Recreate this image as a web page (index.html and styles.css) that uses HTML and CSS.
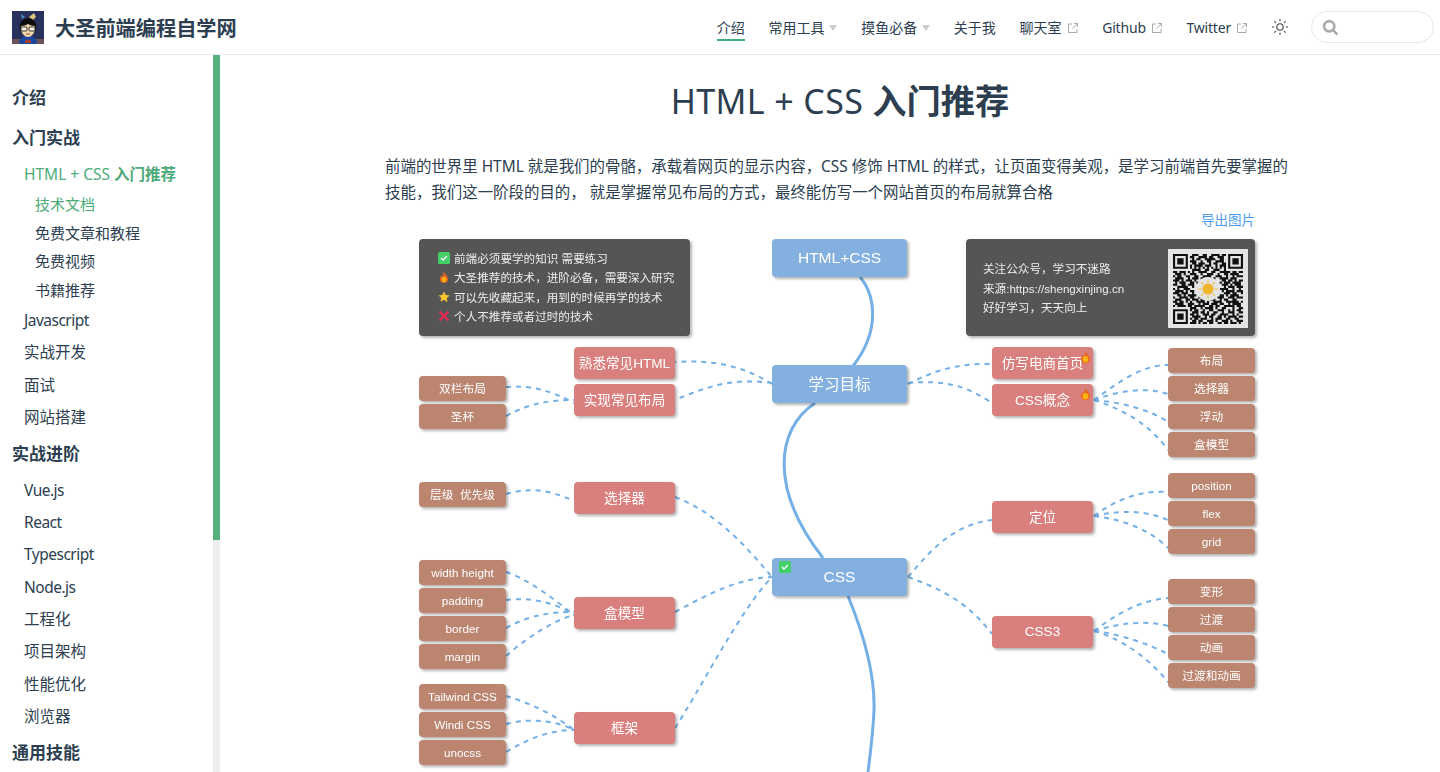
FILE: index.html
```html
<!DOCTYPE html>
<html lang="zh-CN">
<head>
<meta charset="utf-8">
<title>大圣前端编程自学网</title>
<link rel="stylesheet" href="styles.css">
</head>
<body>
<div class="app">
  <header class="navbar">
    <a class="brand">
      <svg class="avatar" viewBox="0 0 32 33">
        <rect width="32" height="33" fill="#27315c"/>
        <rect y="28" width="32" height="5" fill="#6d5353"/>
        <path d="M7 33c0-6 4-8 9-8s9 2 9 8z" fill="#1c47a0"/>
        <path d="M14 28l2 2 2-2 1 4h-6z" fill="#b5421f"/>
        <path d="M17 6l5-4 2 4-3 3z" fill="#d9c27a"/>
        <path d="M9 3l4 3-3 2z" fill="#4b93c8"/>
        <ellipse cx="16" cy="16" rx="8.500" ry="9" fill="#0d0d10"/>
        <path d="M9 15c3 0 5-1 7-2 2 1 4 2 7 2 1 6-3 11-7 11s-8-5-7-11z" fill="#f0d7ae"/>
        <g fill="#fbf5e5" stroke="#222" stroke-width=".9">
          <rect x="9" y="16" width="6" height="4" rx="1"/>
          <rect x="17" y="16" width="6" height="4" rx="1"/>
        </g>
        <path d="M14 23h4" stroke="#a3472b"/>
      </svg>
      <span class="brand-name">大圣前端编程自学网</span>
    </a>
    <nav class="nav-links">
      <a class="nav-item active">介绍</a>
      <a class="nav-item">常用工具<i class="caret"></i></a>
      <a class="nav-item">摸鱼必备<i class="caret"></i></a>
      <a class="nav-item">关于我</a>
      <a class="nav-item">聊天室<svg class="ext" viewBox="0 0 12 12"><path d="M5 2H1.500v8.500H10V7M7 1.500h3.500V5M10.500 1.500L5.500 6.500"/></svg></a>
      <a class="nav-item lat">Github<svg class="ext" viewBox="0 0 12 12"><path d="M5 2H1.500v8.500H10V7M7 1.500h3.500V5M10.500 1.500L5.500 6.500"/></svg></a>
      <a class="nav-item lat">Twitter<svg class="ext" viewBox="0 0 12 12"><path d="M5 2H1.500v8.500H10V7M7 1.500h3.500V5M10.500 1.500L5.500 6.500"/></svg></a>
    </nav>
    <svg class="sun" viewBox="0 0 18 18"><circle cx="9" cy="9" r="3.200"/><path d="M9 1v2.200M9 14.800V17M1 9h2.200M14.800 9H17M3.300 3.300l1.600 1.600M13.100 13.100l1.600 1.600M3.300 14.700l1.600-1.600M13.100 4.900l1.600-1.600"/></svg>
    <div class="search">
      <svg class="search-icon" viewBox="0 0 16 16"><circle cx="6.800" cy="6.800" r="4.800"/><path d="M10.500 10.500l4 4.200"/></svg>
    </div>
  </header>

  <div class="body">
    <aside class="sidebar">
      <nav class="side-nav">
        <a class="side-head first">介绍</a>
        <a class="side-head">入门实战</a>
        <a class="side-item current">HTML + CSS <b>入门推荐</b></a>
        <a class="side-sub on">技术文档</a>
        <a class="side-sub">免费文章和教程</a>
        <a class="side-sub">免费视频</a>
        <a class="side-sub">书籍推荐</a>
        <a class="side-item lat">Javascript</a>
        <a class="side-item">实战开发</a>
        <a class="side-item">面试</a>
        <a class="side-item">网站搭建</a>
        <a class="side-head">实战进阶</a>
        <a class="side-item lat">Vue.js</a>
        <a class="side-item lat">React</a>
        <a class="side-item lat">Typescript</a>
        <a class="side-item lat">Node.js</a>
        <a class="side-item">工程化</a>
        <a class="side-item">项目架构</a>
        <a class="side-item">性能优化</a>
        <a class="side-item">浏览器</a>
        <a class="side-head">通用技能</a>
      </nav>
      <div class="scrolltrack"><div class="scrollthumb"></div></div>
    </aside>

    <main class="main">
      <article class="doc">
        <h1 class="title"><span class="title-lat">HTML + CSS</span> <b>入门推荐</b></h1>
        <p class="intro">前端的世界里 HTML 就是我们的骨骼，承载着网页的显示内容，CSS 修饰 HTML 的样式，让页面变得美观，是学习前端首先要掌握的技能，我们这一阶段的目的， 就是掌握常见布局的方式，最终能仿写一个网站首页的布局就算合格</p>
        <div class="export-row"><a class="export">导出图片</a></div>

        <div class="map">
          <svg class="edges" viewBox="385 232 910 540">
            <g class="solid">
              <path d="M860 277C875 295 881 330 853 366"/>
              <path d="M815 403C775 430 770 490 823 558"/>
              <path d="M848 596C866 640 875 680 874 710C873 735 870 755 868 772"/>
            </g>
            <g class="dash">
              <path d="M908 384C935 370 960 363 992 364"/>
              <path d="M908 383C945 380 965 385 992 403"/>
              <path d="M772 384C740 364 710 360 675 362"/>
              <path d="M772 383C735 378 710 385 675 400"/>
              <path d="M506 387C530 385 550 390 574 403"/>
              <path d="M506 416C530 403 550 400 574 400"/>
              <path d="M506 494C530 487 550 490 574 501"/>
              <path d="M675 497C715 512 745 545 772 577"/>
              <path d="M675 612C710 593 740 578 772 577"/>
              <path d="M675 728C700 690 740 610 772 577"/>
              <path d="M506 572C530 580 555 600 574 615"/>
              <path d="M506 600C530 597 555 602 574 615"/>
              <path d="M506 628C530 615 550 612 574 612"/>
              <path d="M506 656C530 635 555 620 574 615"/>
              <path d="M506 696C530 703 555 715 574 730"/>
              <path d="M506 724C530 718 555 720 574 730"/>
              <path d="M506 752C530 738 550 730 574 730"/>
              <path d="M908 577C935 545 955 525 992 520"/>
              <path d="M908 577C945 590 970 605 992 634"/>
              <path d="M1094 400C1115 385 1140 365 1168 365"/>
              <path d="M1094 400C1115 392 1145 386 1168 394"/>
              <path d="M1094 400C1125 403 1150 410 1168 422"/>
              <path d="M1094 400C1125 410 1150 425 1168 450"/>
              <path d="M1094 516C1115 500 1140 490 1168 492"/>
              <path d="M1094 516C1120 510 1145 510 1168 520"/>
              <path d="M1094 516C1125 520 1150 530 1168 548"/>
              <path d="M1094 631C1115 615 1140 600 1168 598"/>
              <path d="M1094 631C1120 623 1145 620 1168 626"/>
              <path d="M1094 631C1125 635 1150 645 1168 654"/>
              <path d="M1094 631C1125 640 1150 660 1168 682"/>
            </g>
          </svg>

          <div class="panel legend">
            <div class="legend-row"><svg class="ico" viewBox="0 0 12 12"><rect width="12" height="12" rx="1.500" fill="#43cf68"/><path d="M3 6l2 2 4-4" fill="none" stroke="#fff" stroke-width="1.300"/></svg>前端必须要学的知识 需要练习</div>
            <div class="legend-row"><svg class="ico" viewBox="0 0 12 12"><path d="M6 .5C6.500 3 10 5 10 8a4 4 0 0 1-8 0c0-2 1-3 2-4 0 1 .5 1.500 1 1.500C5.500 4 5 2 6 .5z" fill="#e8641e"/><ellipse cx="6" cy="8.500" rx="2.200" ry="2.700" fill="#fbb016"/></svg>大圣推荐的技术，进阶必备，需要深入研究</div>
            <div class="legend-row"><svg class="ico" viewBox="0 0 12 12"><path d="M6 .5l1.700 3.600 3.900.5-2.900 2.700.8 3.900L6 8.800l-3.500 1.900.8-3.900L.4 4.600l3.900-.5z" fill="#fdc62e"/></svg>可以先收藏起来，用到的时候再学的技术</div>
            <div class="legend-row"><svg class="ico" viewBox="0 0 12 12"><path d="M1.500 1.500l9 9M10.500 1.500l-9 9" stroke="#ea2a55" stroke-width="2.200"/></svg>个人不推荐或者过时的技术</div>
          </div>

          <div class="panel follow">
            <div class="follow-text">
              <div>关注公众号，学习不迷路</div>
              <div>来源:https://shengxinjing.cn</div>
              <div>好好学习，天天向上</div>
            </div>
            <div class="qr">
              <svg class="qr-code" viewBox="0 0 33 33">
                <path class="qr-modules" d="M0 .5h7M26 .5h7M9 .5h3M14 .5h2M18 .5h4M23 .5h2
                M0 1.500h1M6 1.500h1M26 1.500h1M32 1.500h1M8 1.500h2M12 1.500h4M17 1.500h2M21 1.500h3
                M0 2.500h1M2 2.500h3M6 2.500h1M26 2.500h1M28 2.500h3M32 2.500h1M9 2.500h1M11 2.500h2M15 2.500h5M22 2.500h2
                M0 3.500h1M2 3.500h3M6 3.500h1M26 3.500h1M28 3.500h3M32 3.500h1M8 3.500h3M13 3.500h1M16 3.500h2M20 3.500h4
                M0 4.500h1M2 4.500h3M6 4.500h1M26 4.500h1M28 4.500h3M32 4.500h1M9 4.500h2M12 4.500h3M17 4.500h1M19 4.500h2M23 4.500h2
                M0 5.500h1M6 5.500h1M26 5.500h1M32 5.500h1M8 5.500h1M10 5.500h4M15 5.500h3M20 5.500h1M22 5.500h3
                M0 6.500h7M26 6.500h7M8 6.500h1M10 6.500h1M12 6.500h1M14 6.500h1M16 6.500h1M18 6.500h1M20 6.500h1M22 6.500h1M24 6.500h1
                M9 7.500h4M15 7.500h2M19 7.500h3M24 7.500h1
                M0 8.500h2M3 8.500h3M7 8.500h1M9 8.500h1M12 8.500h4M18 8.500h2M22 8.500h5M28 8.500h2M31 8.500h2
                M1 9.500h3M5 9.500h1M8 9.500h3M13 9.500h1M16 9.500h3M21 9.500h1M24 9.500h2M27 9.500h4
                M0 10.500h1M2 10.500h2M6 10.500h2M10 10.500h2M14 10.500h4M20 10.500h3M25 10.500h1M28 10.500h1M30 10.500h3
                M1 11.500h4M7 11.500h1M9 11.500h3M13 11.500h2M17 11.500h1M19 11.500h1M22 11.500h4M27 11.500h3
                M0 12.500h3M4 12.500h1M6 12.500h3M10 12.500h1M23 12.500h2M26 12.500h2M29 12.500h1M31 12.500h2
                M1 13.500h1M3 13.500h3M8 13.500h2M11 13.500h1M22 13.500h1M24 13.500h3M28 13.500h4
                M0 14.500h2M4 14.500h2M7 14.500h3M23 14.500h3M27 14.500h1M29 14.500h3
                M2 15.500h4M6 15.500h1M9 15.500h1M24 15.500h1M26 15.500h3M30 15.500h3
                M0 16.500h1M2 16.500h1M5 16.500h3M22 16.500h4M28 16.500h1M31 16.500h1
                M1 17.500h4M6 17.500h1M8 17.500h2M23 17.500h1M25 17.500h4M30 17.500h3
                M0 18.500h3M4 18.500h3M9 18.500h1M24 18.500h3M28 18.500h2M32 18.500h1
                M2 19.500h2M5 19.500h1M7 19.500h4M22 19.500h2M25 19.500h1M27 19.500h4
                M0 20.500h1M3 20.500h4M8 20.500h2M12 20.500h1M21 20.500h3M26 20.500h3M30 20.500h3
                M1 21.500h3M6 21.500h2M9 21.500h3M13 21.500h2M17 21.500h3M22 21.500h1M24 21.500h2M28 21.500h2
                M0 22.500h2M3 22.500h2M6 22.500h1M8 22.500h1M11 22.500h4M16 22.500h1M19 22.500h4M25 22.500h6M32 22.500h1
                M1 23.500h4M7 23.500h3M12 23.500h1M14 23.500h3M18 23.500h3M22 23.500h2M26 23.500h1M28 23.500h4
                M0 24.500h1M2 24.500h4M7 24.500h2M10 24.500h5M17 24.500h2M20 24.500h2M24 24.500h5M30 24.500h2
                M8 25.500h3M13 25.500h1M15 25.500h4M20 25.500h1M23 25.500h2M28 25.500h1M31 25.500h2
                M0 26.500h7M8 26.500h1M10 26.500h2M14 26.500h1M17 26.500h2M21 26.500h3M26 26.500h1M28 26.500h1M30 26.500h2
                M0 27.500h1M6 27.500h1M9 27.500h3M13 27.500h2M16 27.500h1M19 27.500h2M23 27.500h1M26 27.500h3M31 27.500h2
                M0 28.500h1M2 28.500h3M6 28.500h1M8 28.500h2M11 28.500h1M14 28.500h3M18 28.500h2M22 28.500h4M28 28.500h1M30 28.500h1
                M0 29.500h1M2 29.500h3M6 29.500h1M9 29.500h4M15 29.500h1M17 29.500h2M21 29.500h2M24 29.500h1M26 29.500h4M31 29.500h2
                M0 30.500h1M2 30.500h3M6 30.500h1M8 30.500h1M10 30.500h2M13 30.500h3M18 30.500h1M20 30.500h3M25 30.500h2M29 30.500h2
                M0 31.500h1M6 31.500h1M9 31.500h2M12 31.500h2M16 31.500h3M20 31.500h1M23 31.500h3M27 31.500h1M30 31.500h3
                M0 32.500h7M8 32.500h3M12 32.500h1M14 32.500h2M17 32.500h2M21 32.500h2M24 32.500h2M27 32.500h3M31 32.500h1"/>
                <circle cx="16.500" cy="16.500" r="5.600" fill="#e4e4e4"/>
                <circle cx="16.500" cy="16.500" r="2.600" fill="#eeb52c"/>
                <path class="qr-rays" d="M16.500 12v1.500M16.500 19.500V21M12 16.500h1.500M19.500 16.500H21M13.300 13.300l1 1M18.700 18.700l1 1M13.300 19.700l1-1M18.700 14.300l1-1"/>
              </svg>
            </div>
          </div>

          <div class="node blue c-mid y7 latin">HTML+CSS</div>
          <div class="node blue c-mid y133">学习目标</div>
          <div class="node blue c-mid y326 latin"><svg class="tick" viewBox="0 0 12 12"><rect width="12" height="12" rx="1.500" fill="#43cf68"/><path d="M3 6l2 2 4-4" fill="none" stroke="#fff" stroke-width="1.300"/></svg>CSS</div>

          <div class="node red c-l2 y115">熟悉常见HTML</div>
          <div class="node red c-l2 y152">实现常见布局</div>
          <div class="node red c-l2 y250">选择器</div>
          <div class="node red c-l2 y365">盒模型</div>
          <div class="node red c-l2 y480">框架</div>

          <div class="node red c-r2 y115">仿写电商首页<svg class="flame" viewBox="0 0 12 14"><path d="M6 .5C6.500 3 11 6 11 9a5 5 0 0 1-10 0c0-2 1-3 2-4 .5 1 1 1.500 1.500 1.500C5.500 4.500 5 2.500 6 .5z" fill="#e8641e"/><ellipse cx="6" cy="9.500" rx="3.200" ry="3.500" fill="#fbb016"/></svg></div>
          <div class="node red c-r2 y152">CSS概念<svg class="flame" viewBox="0 0 12 14"><path d="M6 .5C6.500 3 11 6 11 9a5 5 0 0 1-10 0c0-2 1-3 2-4 .5 1 1 1.500 1.500 1.500C5.500 4.500 5 2.500 6 .5z" fill="#e8641e"/><ellipse cx="6" cy="9.500" rx="3.200" ry="3.500" fill="#fbb016"/></svg></div>
          <div class="node red c-r2 y269">定位</div>
          <div class="node red c-r2 y384 latin">CSS3</div>

          <div class="node brown c-l1 y144">双栏布局</div>
          <div class="node brown c-l1 y172">圣杯</div>
          <div class="node brown c-l1 y250">层级&nbsp;&nbsp;优先级</div>
          <div class="node brown c-l1 y328 latin">width height</div>
          <div class="node brown c-l1 y356 latin">padding</div>
          <div class="node brown c-l1 y384 latin">border</div>
          <div class="node brown c-l1 y412 latin">margin</div>
          <div class="node brown c-l1 y452 latin">Tailwind CSS</div>
          <div class="node brown c-l1 y480 latin">Windi CSS</div>
          <div class="node brown c-l1 y508 latin">unocss</div>

          <div class="node brown c-r1 y116">布局</div>
          <div class="node brown c-r1 y144">选择器</div>
          <div class="node brown c-r1 y172">浮动</div>
          <div class="node brown c-r1 y200">盒模型</div>
          <div class="node brown c-r1 y241 latin">position</div>
          <div class="node brown c-r1 y269 latin">flex</div>
          <div class="node brown c-r1 y297 latin">grid</div>
          <div class="node brown c-r1 y347">变形</div>
          <div class="node brown c-r1 y375">过渡</div>
          <div class="node brown c-r1 y403">动画</div>
          <div class="node brown c-r1 y431">过渡和动画</div>
        </div>
      </article>
    </main>
  </div>
</div>
</body>
</html>
```
FILE: styles.css
```css
* { box-sizing: border-box; }
html, body { margin: 0; height: 100%; overflow: hidden; }
body {
  font-family: "Noto Sans", "Noto Sans CJK SC", sans-serif;
  color: #2c3e50;
  background: #fff;
}
a { color: inherit; text-decoration: none; }

.app { display: flex; flex-direction: column; height: 772px; }

/* navbar */
.navbar {
  flex: none;
  height: 55px;
  display: flex;
  align-items: center;
  padding: 0 6px 0 12px;
  border-bottom: 1px solid #eaecef;
}
.brand { display: flex; align-items: center; gap: 11px; margin-right: auto; }
.avatar { width: 32px; height: 33px; display: block; }
.brand-name { font-size: 20.200px; font-weight: 700; line-height: 28px; padding-top: 2px; }
.nav-links { display: flex; align-items: center; gap: 23.700px; font-size: 14px; padding-top: 2px; }
.nav-item {
  display: flex;
  align-items: center;
  height: 22px;
  line-height: 22px;
  color: #2c3e50;
}
.nav-item.lat { letter-spacing: -.2px; }
.nav-item.active { border-bottom: 2px solid #3eaf7c; height: 24px; margin-top: 2px; }
.caret {
  width: 0; height: 0;
  margin-left: 5px;
  border-left: 4px solid transparent;
  border-right: 4px solid transparent;
  border-top: 6px solid #ccc;
}
.ext { width: 12px; height: 12px; margin-left: 5px; fill: none; stroke: #aaa; stroke-width: 1; }
.sun { width: 18px; height: 18px; margin-left: 23px; fill: none; stroke: #444; stroke-width: 1.100; }
.search {
  width: 123px; height: 32px;
  margin-left: 22px;
  border: 1px solid #e6e6e6;
  border-radius: 16px;
  display: flex;
  align-items: center;
  padding-left: 10px;
}
.search-icon { width: 17px; height: 17px; fill: none; stroke: #aaa; stroke-width: 2.500; }

/* layout */
.body { flex: 1; min-height: 0; display: flex; }
.sidebar { flex: none; width: 220px; display: flex; overflow: hidden; }
.side-nav { flex: 1; display: flex; flex-direction: column; padding: 29px 0 0 12px; }
.scrolltrack { flex: none; width: 7px; background: #ebedf0; }
.scrollthumb { height: 485px; background: #55b07d; }

.side-head { font-size: 17px; font-weight: 700; line-height: 28px; margin: 6px 0; }
.side-head.first { margin-top: 0; }
.side-item { font-size: 15.500px; line-height: 24px; padding: 4px 0 4.400px 12px; }
.side-item.lat { letter-spacing: -.5px; }
.side-item.current { color: #4cab78; }
.side-item.current b { font-weight: 700; }
.side-sub { font-size: 15px; line-height: 22px; padding: 3px 0 3.400px 23px; }
.side-sub.on { color: #4cab78; }

.main { flex: 1; min-width: 0; padding-left: 20px; }
.doc { width: 910px; margin: 0 auto; }
.title {
  margin: 21px 0 0;
  text-align: center;
  font-size: 34px;
  line-height: 50px;
  font-weight: 400;
  color: #2c3e50;
}
.title-lat { letter-spacing: .4px; }
.title b { font-weight: 700; font-size: 34.300px; }
.intro { margin: 27px 0 0; font-size: 15.440px; line-height: 26px; color: #2c3e50; }
.export-row { display: flex; justify-content: flex-end; padding-right: 40px; height: 30px; margin-top: 2px; }
.export { font-size: 13.500px; line-height: 20px; color: #4d9cf0; margin-top: 3px; }

/* mind map: a free canvas, nodes sit at their own coordinates */
.map { position: relative; width: 910px; height: 540px; margin-top: -5px; filter: blur(.25px); }
.edges { position: absolute; left: 0; top: 0; width: 910px; height: 540px; }
.edges path { fill: none; stroke: #74b0e6; }
.solid path { stroke-width: 3; }
.dash path { stroke-width: 2; stroke-dasharray: 5 5; }

.node {
  position: absolute;
  display: flex;
  align-items: center;
  justify-content: center;
  border-radius: 4px;
  color: #fff;
  font-family: "Liberation Sans", "Noto Sans CJK SC", sans-serif;
  box-shadow: 2px 2px 3px rgba(0,0,0,.3);
  white-space: nowrap;
}
.blue { background: #84b0e0; width: 135px; height: 38px; font-size: 15.500px; padding-bottom: 3px; }
.red { background: #d9807e; width: 101px; height: 32px; font-size: 13.600px; padding-bottom: 3px; }
.brown { background: #bb8570; width: 87px; height: 25px; font-size: 11.700px; padding-bottom: 2px; }
.node.latin { padding-bottom: 1px; }
.c-l1 { left: 34px; } .c-l2 { left: 189px; } .c-mid { left: 387px; } .c-r2 { left: 607px; } .c-r1 { left: 783px; }
.y7 { top: 7px; } .y115 { top: 115px; } .y116 { top: 116px; } .y133 { top: 133px; } .y144 { top: 144px; }
.y152 { top: 152px; } .y172 { top: 172px; } .y200 { top: 200px; } .y241 { top: 241px; } .y250 { top: 250px; }
.y269 { top: 269px; } .y297 { top: 297px; } .y326 { top: 326px; } .y328 { top: 328px; } .y347 { top: 347px; }
.y356 { top: 356px; } .y365 { top: 365px; } .y375 { top: 375px; } .y384 { top: 384px; } .y403 { top: 403px; }
.y412 { top: 412px; } .y431 { top: 431px; } .y452 { top: 452px; } .y480 { top: 480px; } .y508 { top: 508px; }

.tick { position: absolute; left: 7px; top: 3px; width: 12px; height: 12px; }
.flame { position: absolute; right: 2px; top: 3px; width: 11px; height: 14px; }

.panel {
  position: absolute;
  top: 7px;
  height: 97px;
  background: #555;
  border-radius: 4px;
  color: #eee;
  font-family: "Liberation Sans", "Noto Sans CJK SC", sans-serif;
  font-size: 11.600px;
  box-shadow: 2px 2px 3px rgba(0,0,0,.3);
}
.legend {
  left: 34px;
  width: 271px;
  padding: 9px 0 0 19px;
  display: flex;
  flex-direction: column;
}
.legend-row { display: flex; align-items: center; gap: 4px; height: 19.500px; white-space: nowrap; }
.ico { flex: none; width: 12px; height: 12px; }
.follow {
  left: 581px;
  width: 289px;
  padding: 10px 7px 8px 17px;
  display: flex;
  justify-content: space-between;
  align-items: stretch;
}
.follow-text { display: flex; flex-direction: column; justify-content: center; line-height: 19.500px; white-space: nowrap; }
.qr { width: 80px; background: #e4e4e4; display: flex; align-items: center; justify-content: center; }
.qr-code { width: 70px; height: 70px; }
.qr-modules { fill: none; stroke: #111; stroke-width: 1; }
.qr-rays { fill: none; stroke: #eeb52c; stroke-width: .5; }
```
